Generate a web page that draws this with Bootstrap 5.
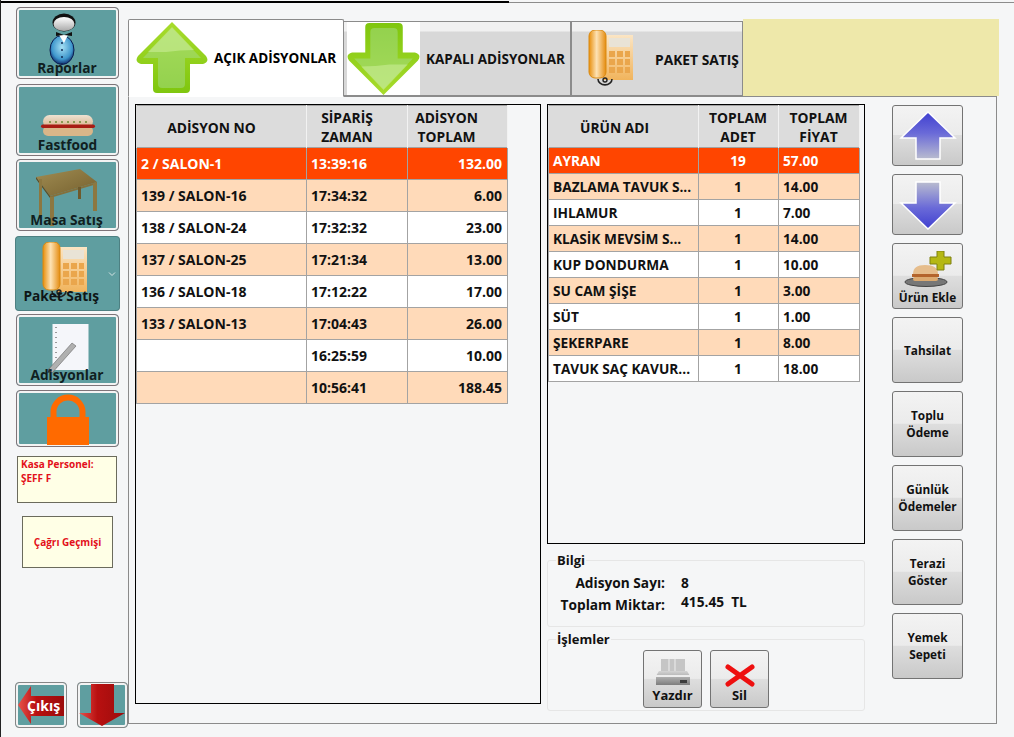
<!DOCTYPE html>
<html lang="tr">
<head>
  <meta charset="UTF-8" />
  <meta name="viewport" content="width=device-width, initial-scale=1" />
  <title>Adisyonlar</title>
  <link href="https://cdn.jsdelivr.net/npm/bootstrap@5.3.3/dist/css/bootstrap.min.css" rel="stylesheet" />
  <style>
    html, body { height: 737px; overflow: hidden; }
    body {
      background-color: #f5f6f7;
      font-family: "Open Sans", "Noto Sans", sans-serif;
      font-weight: 700;
      font-size: 13px;
      color: #111;
      border-left: 1px solid #222;
    }
    svg { display: block; }

    /* ust cizgi */
    .ust-cizgi { height: 4px; padding-top: 1px; }
    .ust-cizgi .siyah { width: 508px; height: 2px; background: #000; }
    .ust-cizgi .gri { height: 1px; background: #8c8c8c; margin-top: 1px; }

    .kabuk { height: 733px; }

    /* sol menu */
    .sol-menu { width: 127px; flex: none; padding: 3px 0 9px 14px; }
    .menu-btn {
      position: relative;
      display: flex;
      justify-content: center;
      padding: 0;
      width: 103px;
      margin-left: 1px;
      background: #5f9ea0;
      border: 1px solid #7e7479;
      box-shadow: inset 0 0 0 2px #f3f3f3;
      border-radius: 4px;
      color: #10201f;
      font-size: 13.7px;
      font-weight: 700;
      overflow: hidden;
    }
    .menu-btn .etiket { position: absolute; left: 0; right: 0; text-align: center; line-height: 16px; }
    .m-rapor { height: 72px; margin-bottom: 5px; }
    .m-rapor .etiket { bottom: 2px; left: -1px; }
    .m-fast { height: 72px; margin-bottom: 3px; }
    .m-fast .etiket { bottom: 2px; }
    .m-masa { height: 72px; margin-bottom: 5px; }
    .m-masa .etiket { bottom: 2px; left: -2px; }
    .m-adisyon { height: 72px; margin-bottom: 4px; }
    .m-adisyon .etiket { bottom: 2px; left: -1px; }
    .m-kilit { height: 57px; margin-bottom: 9px; }

    .paket-grup { width: 105px; height: 75px; margin-bottom: 3px; }
    .paket-btn {
      position: relative;
      width: 91px;
      display: flex;
      justify-content: center;
      background: #5f9ea0;
      border: 1px solid #4d8082;
      border-right: 1px solid #44696b;
      border-radius: 4px 0 0 4px;
      padding: 5px 0 0 8px;
      font-size: 13.7px;
      color: #0e1616;
      font-weight: 700;
    }
    .paket-btn .etiket { position: absolute; left: 0; right: -1px; bottom: 6px; text-align: center; line-height: 16px; white-space: nowrap; }
    .paket-ok {
      width: 14px;
      background: #5f9ea0;
      border: 1px solid #4d8082;
      border-left: 0;
      border-radius: 0 4px 4px 0;
      padding: 0;
      display: flex;
      align-items: center;
      justify-content: center;
    }

    .kasa-kutu, .cagri-kutu {
      background: #ffffe6;
      border: 1px solid #6b6b5c;
      color: #e3101a;
      font-size: 10px;
      font-weight: 700;
      line-height: 14px;
    }
    .kasa-kutu { width: 100px; height: 47px; margin: 0 0 13px 2px; padding: 0 3px; }
    .cagri-kutu { width: 91px; height: 52px; margin-left: 7px; border-radius: 0; padding: 0; }

    .alt-btnler { margin-top: auto; gap: 10px; }
    .alt-btn {
      width: 52px;
      height: 46px;
      padding: 0;
      position: relative;
      background: #5f9ea0;
      border: 1px solid #868686;
      box-shadow: inset 0 0 0 2px #f3f3f3;
      border-radius: 4px;
      overflow: hidden;
      display: flex;
      align-items: center;
      justify-content: center;
    }
    .alt-btn .etiket { position: absolute; left: 11px; top: 14px; color: #fff; font-size: 14px; font-weight: 700; line-height: 18px; }

    /* sekmeler */
    .icerik { width: 871px; flex: none; padding-top: 15px; }
    .sekme-serit { border: 0; height: 78px; flex-wrap: nowrap; margin-bottom: -1px; }
    .sekme-serit .nav-link {
      height: 75px;
      margin: 2px 0 0 0;
      padding: 0;
      display: flex;
      align-items: center;
      color: #111;
      border: 1px solid #8b8b8b;
      border-bottom-color: #8b8b8b;
      border-radius: 0;
      background: linear-gradient(#f1f1f1 0, #f1f1f1 9px, #d8d8d8 10px, #d8d8d8 100%);
      font-size: 13.5px;
      white-space: nowrap;
    }
    .sekme-serit .nav-link.active {
      height: 78px;
      margin-top: 0;
      background: #fff;
      border-color: #8b8b8b;
      border-bottom-color: #fff;
      border-radius: 2px 2px 0 0;
      position: relative;
      z-index: 2;
    }
    .sekme-acik { width: 216px; padding-left: 7px !important; }
    .sekme-kapali { width: 228px; padding-left: 3px !important; margin-left: -1px !important; }
    .sekme-paket { width: 172px; margin-left: 0 !important; }
    .sekme-acik span { margin-left: 6px; }
    .sekme-kapali span { margin-left: 6px; margin-top: 2px; }
    .sekme-paket span { margin-left: 21px; margin-top: 3px; font-size: 13.8px; }
    .sekme-beyaz { background: #fff; }
    .sekme-sari { background: #eee8aa; width: 256px; height: 77px; }

    .panel-govde {
      width: 869px;
      height: 628px;
      border: 1px solid #8b8b8b;
      padding: 7px 0 0 6px;
      position: relative;
    }

    /* tablolar */
    .liste-cerceve { border: 1px solid #000; overflow: hidden; }
    .cerceve-sol { width: 406px; height: 600px; }
    .cerceve-sag { width: 318px; height: 440px; }
    .adisyon-tablo { table-layout: fixed; margin: 0; border-color: #a3a3a3; font-size: 14px; }
    .adisyon-tablo td, .adisyon-tablo th {
      padding: 0 5px 0 4px;
      vertical-align: middle;
      font-weight: 700;
      color: #111;
      white-space: nowrap;
      overflow: hidden;
      line-height: 18px;
    }
    .adisyon-tablo thead th {
      --bs-table-bg: #dcdcdc;
      height: 42px;
      font-size: 13.8px;
      line-height: 19px;
      text-align: center;
      white-space: normal;
      border-color: #f2f2f2;
      border-bottom-color: #a3a3a3;
      border-top-color: #dcdcdc;
      border-left-color: #dcdcdc;
    }
    .tablo-sol { width: 371px; }
    .tablo-sag { width: 311px; font-size: 13.7px; }
    .tablo-sol tbody td { height: 32px; }
    .tablo-sag tbody td { height: 26px; }
    .tablo-sol th:first-child { padding-right: 24px; padding-top: 2px; }
    .tablo-sol th:nth-child(2) { padding-right: 24px; }
    .tablo-sol th:nth-child(3) { padding-right: 26px; }
    .tablo-sag th:first-child { padding-right: 22px; padding-top: 2px; }
    .sira-secili td { --bs-table-bg: #ff4500; color: #fff !important; }
    .sira-acik td { --bs-table-bg: #ffdab9; }
    .sira-beyaz td { --bs-table-bg: #fff; }

    /* fieldset */
    .sag-sutun { width: 318px; margin-left: 6px; }
    .grup-kutu {
      border: 1px solid #e6e6e6;
      border-radius: 3px;
      padding: 0 0 0 8px;
      margin: 0;
      font-size: 13.7px;
    }
    .grup-kutu legend {
      float: none;
      width: auto;
      font-size: 13px;
      line-height: 16px;
      padding: 0 1px;
      margin: 0;
    }
    .grup-bilgi { height: 75px; margin-top: 8px; }
    .grup-islem { height: 80px; margin-top: 4px; }
    .bilgi-satir { line-height: 18px; }
    .bilgi-ilk { margin-top: 6px; }
    .bilgi-ikinci { margin-top: 4px; }
    .bilgi-etiket { width: 109px; text-align: right; margin-right: 16px; }
    .bilgi-yukari { margin-top: -3px; }

    /* parlak butonlar */
    .parlak-btn {
      width: 71px;
      padding: 0;
      background: linear-gradient(#f3f3f3 0, #ebebeb 49%, #dedede 50%, #c9c9c9 100%);
      border: 1px solid #737373;
      border-radius: 3px;
      color: #111;
      font-weight: 700;
      font-size: 11.8px;
      line-height: 17px;
    }
    .parlak-btn:hover { background: #e3e3e3; }
    .sag-btnler { width: 71px; margin-left: 27px; margin-top: 1px; gap: 8px; }
    .b-kisa { height: 61px; }
    .b-uzun { height: 66px; }
    .b-ikonlu { padding-top: 3px; }
    .b-ikonlu span { display: block; margin-top: 2px; line-height: 16px; }
    .islem-btn { width: 59px; height: 58px; font-size: 13px; }
    .islem-btnler { gap: 8px; margin: 3px 0 0 87px; }
    .etiket-alt { display: block; margin-top: 0; line-height: 16px; }
  </style>
</head>
<body>
  <svg width="0" height="0" class="position-absolute">
    <defs>
      <linearGradient id="gYesil" x1="0" y1="0" x2="0" y2="1">
        <stop offset="0" stop-color="#a8dc2c" /><stop offset="1" stop-color="#7fc60e" />
      </linearGradient>
      <linearGradient id="gTurn" x1="0" y1="0" x2="1" y2="0">
        <stop offset="0" stop-color="#e88f0c" /><stop offset=".45" stop-color="#fde2b4" /><stop offset="1" stop-color="#e58c10" />
      </linearGradient>
      <linearGradient id="gGovde" x1="0" y1="0" x2="0" y2="1">
        <stop offset="0" stop-color="#fbe5c4" /><stop offset="1" stop-color="#f1b45c" />
      </linearGradient>
      <linearGradient id="gMavi" x1="0" y1="0" x2="0" y2="1">
        <stop offset="0" stop-color="#3f3fd0" /><stop offset=".45" stop-color="#6a6ad8" /><stop offset="1" stop-color="#b9bccf" />
      </linearGradient>
      <linearGradient id="gMaviAlt" x1="0" y1="1" x2="0" y2="0">
        <stop offset="0" stop-color="#3f3fd0" /><stop offset=".45" stop-color="#6a6ad8" /><stop offset="1" stop-color="#b9bccf" />
      </linearGradient>
      <linearGradient id="gKirmizi" x1="0" y1="0" x2="1" y2="0">
        <stop offset="0" stop-color="#e8524c" /><stop offset=".4" stop-color="#b81010" /><stop offset="1" stop-color="#9c0c0c" />
      </linearGradient>
      <radialGradient id="gMaviTop" cx=".5" cy=".4" r=".6">
        <stop offset="0" stop-color="#a6e0f4" /><stop offset=".7" stop-color="#3e96cc" /><stop offset="1" stop-color="#0e2c6c" />
      </radialGradient>
      <linearGradient id="gKafa" x1="0" y1="0" x2="0" y2="1">
        <stop offset="0" stop-color="#ffffff" /><stop offset="1" stop-color="#a9a9a9" />
      </linearGradient>
      <linearGradient id="gAhsap" x1="0" y1="0" x2="1" y2="1">
        <stop offset="0" stop-color="#a08c52" /><stop offset="1" stop-color="#75602e" />
      </linearGradient>
      <linearGradient id="gEkmek" x1="0" y1="0" x2="0" y2="1">
        <stop offset="0" stop-color="#efe2d2" /><stop offset="1" stop-color="#d8b088" />
      </linearGradient>
      <linearGradient id="gYazici" x1="0" y1="0" x2="0" y2="1">
        <stop offset="0" stop-color="#d4d4d4" /><stop offset="1" stop-color="#7d7d7d" />
      </linearGradient>

      <symbol id="telefon" viewBox="0 0 46 56">
        <rect x="15" y="5" width="30" height="45" fill="url(#gGovde)" />
        <rect x="21" y="8" width="21" height="9" fill="#e9e3d6" />
        <g fill="#eaa64c">
          <rect x="21" y="21" width="6" height="6" /><rect x="29" y="21" width="6" height="6" /><rect x="37" y="21" width="5" height="6" />
          <rect x="21" y="29" width="6" height="6" /><rect x="29" y="29" width="6" height="6" /><rect x="37" y="29" width="5" height="6" />
          <rect x="21" y="37" width="6" height="6" /><rect x="29" y="37" width="6" height="6" /><rect x="37" y="37" width="5" height="6" />
        </g>
        <rect x="1" y="0" width="17" height="48" rx="6" fill="url(#gTurn)" stroke="#d98a12" />
        <path d="M10 49a6 5 0 1 0 14 0" fill="none" stroke="#222" stroke-width="1.6" />
        <circle cx="17" cy="50" r="2" fill="none" stroke="#222" stroke-width="1.4" />
      </symbol>
      <symbol id="okYesil" viewBox="0 0 72 72">
        <path d="M36 0 70 34q4 6-3 8H54V67q0 4-4 4H21q-4 0-4-4V42H5q-7-2-3-8z" fill="url(#gYesil)" />
        <path d="M36 6 65 36H49V62q0 4-4 4H26q-4 0-4-4V36H7z" fill="#a5db8c" opacity=".5" />
        <path d="M36 5 12 30H30q14-2 28-2z" fill="#cdee9c" opacity=".55" />
      </symbol>
    </defs>
  </svg>

  <div class="ust-cizgi d-flex">
    <div class="siyah"></div>
    <div class="gri flex-grow-1"></div>
  </div>

  <div class="kabuk d-flex">
    <!-- Sol menu -->
    <div class="sol-menu d-flex flex-column">
      <button type="button" class="btn menu-btn m-rapor">
        <svg class="mt-1" style="margin-right:7px" width="30" height="62" viewBox="0 0 30 62">
          <ellipse cx="13" cy="38" rx="12" ry="14.500" fill="url(#gMaviTop)" stroke="#0b1c50" />
          <path d="M13 30V52" stroke="#102a55" stroke-dasharray="2 5" stroke-width="1.500" />
          <path d="M10 23h9l-4 8z" fill="#fff" />
          <path d="M7 20l8 3 8-3v4l-8-1-8 1z" fill="#111" />
          <ellipse cx="15" cy="10.500" rx="11.500" ry="9" fill="#111" />
          <ellipse cx="15" cy="12" rx="10.500" ry="7" fill="url(#gKafa)" />
        </svg>
        <span class="etiket">Raporlar</span>
      </button>
      <button type="button" class="btn menu-btn m-fast">
        <svg style="margin-top:30px" width="56" height="22" viewBox="0 0 56 22">
          <rect x="3" y="0" width="50" height="13" rx="6.500" fill="url(#gEkmek)" />
          <path d="M9 7h38" stroke="#6d8a36" stroke-dasharray="2 4" stroke-width="1.300" />
          <rect x="3" y="11" width="50" height="10" rx="5" fill="#d9b689" />
          <rect x="1" y="9.500" width="54" height="3.500" rx="1.700" fill="#a81c14" />
        </svg>
        <span class="etiket">Fastfood</span>
      </button>
      <button type="button" class="btn menu-btn m-masa">
        <svg style="margin-top:9px" width="64" height="58" viewBox="0 0 64 58">
          <path d="M0 8 44 0 61 13 14 27z" fill="url(#gAhsap)" />
          <path d="M0 8 14 27V29L0 10z" fill="#5f4b22" /><path d="M14 27 61 13V15L14 29z" fill="#84703c" />
          <path d="M3 10h3V47H3z" fill="#8c7740" />
          <path d="M14 28h4V57h-4z" fill="#8c7740" />
          <path d="M42 18h3V30h-3z" fill="#6e5a2c" />
          <path d="M57 14h4V42h-4z" fill="#8c7740" />
        </svg>
        <span class="etiket">Masa Satış</span>
      </button>
      <div class="btn-group paket-grup">
        <button type="button" class="btn paket-btn">
          <svg width="46" height="56"><use href="#telefon" /></svg>
          <span class="etiket">Paket Satış</span>
        </button>
        <button type="button" class="btn paket-ok">
          <svg width="8" height="6" viewBox="0 0 8 6"><path d="M1 1.500 4 4.500 7 1.500" fill="none" stroke="#d5e4e4" /></svg>
        </button>
      </div>
      <button type="button" class="btn menu-btn m-adisyon">
        <svg style="margin-top:9px" width="46" height="54" viewBox="0 0 46 54">
          <rect x="7.500" y="0" width="36" height="46" fill="#f5f6fa" />
          <path d="M11 3V44" stroke="#999" stroke-dasharray="1 4" stroke-width="2" />
          <path d="M3 46 27 19l4 3L7 49z" fill="#b0b0b0" stroke="#666" stroke-width=".6" />
          <path d="M2.500 49 4 44.500l3 3z" fill="#333" />
        </svg>
        <span class="etiket">Adisyonlar</span>
      </button>
      <button type="button" class="btn menu-btn m-kilit">
        <svg style="margin-top:2px" width="42" height="52" viewBox="0 0 42 52">
          <path d="M3.500 25V19a17.500 17.500 0 0 1 35 0V25H32.500V19a11.500 11.500 0 0 0-23 0V25z" fill="#ff6a00" />
          <rect x="0" y="24" width="42" height="28" fill="#ff6a00" />
        </svg>
      </button>
      <div class="kasa-kutu">Kasa Personel:<br />ŞEFF F</div>
      <button type="button" class="btn cagri-kutu">Çağrı Geçmişi</button>
      <div class="alt-btnler d-flex">
        <button type="button" class="btn alt-btn">
          <svg width="48" height="42" viewBox="0 0 48 42">
            <path d="M1 21 14 2V12H47V32H14V40z" fill="url(#gKirmizi)" />
          </svg>
          <span class="etiket">Çıkış</span>
        </button>
        <button type="button" class="btn alt-btn">
          <svg width="48" height="42" viewBox="0 0 48 42">
            <path d="M13 0H36V29H47L24 42 1 29H13z" fill="url(#gKirmizi)" />
          </svg>
        </button>
      </div>
    </div>

    <!-- Icerik -->
    <div class="icerik">
      <ul class="nav nav-tabs sekme-serit">
        <li class="nav-item">
          <a class="nav-link active sekme-acik" href="#">
            <svg width="72" height="72"><use href="#okYesil" /></svg>
            <span>AÇIK ADİSYONLAR</span>
          </a>
        </li>
        <li class="nav-item">
          <a class="nav-link sekme-kapali" href="#">
            <svg class="sekme-beyaz" width="73" height="73" viewBox="0 0 72 72"><use href="#okYesil" transform="rotate(180 36 36)" /></svg>
            <span>KAPALI ADİSYONLAR</span>
          </a>
        </li>
        <li class="nav-item">
          <a class="nav-link sekme-paket" href="#">
            <svg class="ms-3" style="margin-top:-2px" width="46" height="56"><use href="#telefon" /></svg>
            <span>PAKET SATIŞ</span>
          </a>
        </li>
        <li class="sekme-sari"></li>
      </ul>

      <div class="panel-govde d-flex">
        <div class="liste-cerceve cerceve-sol">
          <table class="table table-bordered adisyon-tablo tablo-sol">
            <colgroup><col style="width:170px" /><col style="width:101px" /><col style="width:100px" /></colgroup>
            <thead>
              <tr><th>ADİSYON NO</th><th>SİPARİŞ ZAMAN</th><th>ADİSYON TOPLAM</th></tr>
            </thead>
            <tbody>
              <tr class="sira-secili"><td>2 / SALON-1</td><td>13:39:16</td><td class="text-end">132.00</td></tr>
              <tr class="sira-acik"><td>139 / SALON-16</td><td>17:34:32</td><td class="text-end">6.00</td></tr>
              <tr class="sira-beyaz"><td>138 / SALON-24</td><td>17:32:32</td><td class="text-end">23.00</td></tr>
              <tr class="sira-acik"><td>137 / SALON-25</td><td>17:21:34</td><td class="text-end">13.00</td></tr>
              <tr class="sira-beyaz"><td>136 / SALON-18</td><td>17:12:22</td><td class="text-end">17.00</td></tr>
              <tr class="sira-acik"><td>133 / SALON-13</td><td>17:04:43</td><td class="text-end">26.00</td></tr>
              <tr class="sira-beyaz"><td></td><td>16:25:59</td><td class="text-end">10.00</td></tr>
              <tr class="sira-acik"><td></td><td>10:56:41</td><td class="text-end">188.45</td></tr>
            </tbody>
          </table>
        </div>

        <div class="sag-sutun d-flex flex-column">
          <div class="liste-cerceve cerceve-sag">
            <table class="table table-bordered adisyon-tablo tablo-sag">
              <colgroup><col style="width:150px" /><col style="width:80px" /><col style="width:81px" /></colgroup>
              <thead>
                <tr><th>ÜRÜN ADI</th><th>TOPLAM ADET</th><th>TOPLAM FİYAT</th></tr>
              </thead>
              <tbody>
                <tr class="sira-secili"><td>AYRAN</td><td class="text-center">19</td><td>57.00</td></tr>
                <tr class="sira-acik"><td>BAZLAMA TAVUK S...</td><td class="text-center">1</td><td>14.00</td></tr>
                <tr class="sira-beyaz"><td>IHLAMUR</td><td class="text-center">1</td><td>7.00</td></tr>
                <tr class="sira-acik"><td>KLASİK MEVSİM S...</td><td class="text-center">1</td><td>14.00</td></tr>
                <tr class="sira-beyaz"><td>KUP DONDURMA</td><td class="text-center">1</td><td>10.00</td></tr>
                <tr class="sira-acik"><td>SU CAM ŞİŞE</td><td class="text-center">1</td><td>3.00</td></tr>
                <tr class="sira-beyaz"><td>SÜT</td><td class="text-center">1</td><td>1.00</td></tr>
                <tr class="sira-acik"><td>ŞEKERPARE</td><td class="text-center">1</td><td>8.00</td></tr>
                <tr class="sira-beyaz"><td>TAVUK SAÇ KAVUR...</td><td class="text-center">1</td><td>18.00</td></tr>
              </tbody>
            </table>
          </div>

          <fieldset class="grup-kutu grup-bilgi">
            <legend>Bilgi</legend>
            <div class="bilgi-satir bilgi-ilk d-flex"><span class="bilgi-etiket">Adisyon Sayı:</span><span>8</span></div>
            <div class="bilgi-satir bilgi-ikinci d-flex"><span class="bilgi-etiket">Toplam Miktar:</span><span class="bilgi-yukari">415.45&nbsp; TL</span></div>
          </fieldset>

          <fieldset class="grup-kutu grup-islem">
            <legend>İşlemler</legend>
            <div class="islem-btnler d-flex">
              <button type="button" class="btn parlak-btn islem-btn">
                <svg class="mx-auto" style="margin-top:3px" width="36" height="28" viewBox="0 0 36 28">
                  <rect x="6" y="0" width="24" height="13" fill="#c5c5c5" />
                  <path d="M14 0V13M20 0V13" stroke="#eee" />
                  <path d="M4 12H32L35 17V26H1V17z" fill="url(#gYazici)" />
                  <rect x="1" y="16" width="34" height="2" fill="#ededed" />
                  <rect x="25" y="21" width="7" height="3" fill="#3c3c3c" />
                </svg>
                <span class="etiket-alt">Yazdır</span>
              </button>
              <button type="button" class="btn parlak-btn islem-btn">
                <svg class="mx-auto" style="margin-top:8px" width="30" height="23" viewBox="0 0 30 23">
                  <path d="M3 3 27 20M27 3 3 20" stroke="#ee1010" stroke-width="5" stroke-linecap="round" />
                </svg>
                <span class="etiket-alt">Sil</span>
              </button>
            </div>
          </fieldset>
        </div>

        <div class="sag-btnler d-flex flex-column">
          <button type="button" class="btn parlak-btn b-kisa">
            <svg class="mx-auto" width="58" height="50" viewBox="0 0 58 50">
              <path d="M29 1 56 27H41V48H17V27H2z" fill="url(#gMavi)" stroke="#fff" stroke-width="1.500" />
            </svg>
          </button>
          <button type="button" class="btn parlak-btn b-kisa">
            <svg class="mx-auto" width="58" height="50" viewBox="0 0 58 50">
              <path d="M29 49 56 23H41V2H17V23H2z" fill="url(#gMaviAlt)" stroke="#fff" stroke-width="1.500" />
            </svg>
          </button>
          <button type="button" class="btn parlak-btn b-uzun b-ikonlu">
            <svg class="mx-auto" width="48" height="36" viewBox="0 0 48 36">
              <ellipse cx="22" cy="31" rx="21" ry="4.500" fill="#777" stroke="#444" />
              <path d="M9 23q0-9 12-9 13 0 13 9z" fill="#e6bd8c" />
              <rect x="8" y="23" width="27" height="3" fill="#b4642c" />
              <rect x="9" y="26" width="25" height="4" rx="2" fill="#dcaa70" />
              <path d="M33 0h7v6h7v7h-7v6h-7v-6h-7V6h7z" fill="#b5b814" stroke="#7f8010" />
            </svg>
            <span>Ürün Ekle</span>
          </button>
          <button type="button" class="btn parlak-btn b-uzun">Tahsilat</button>
          <button type="button" class="btn parlak-btn b-uzun">Toplu<br />Ödeme</button>
          <button type="button" class="btn parlak-btn b-uzun">Günlük<br />Ödemeler</button>
          <button type="button" class="btn parlak-btn b-uzun">Terazi<br />Göster</button>
          <button type="button" class="btn parlak-btn b-uzun">Yemek<br />Sepeti</button>
        </div>
      </div>
    </div>
  </div>

  <script src="https://cdn.jsdelivr.net/npm/bootstrap@5.3.3/dist/js/bootstrap.bundle.min.js"></script>
</body>
</html>
